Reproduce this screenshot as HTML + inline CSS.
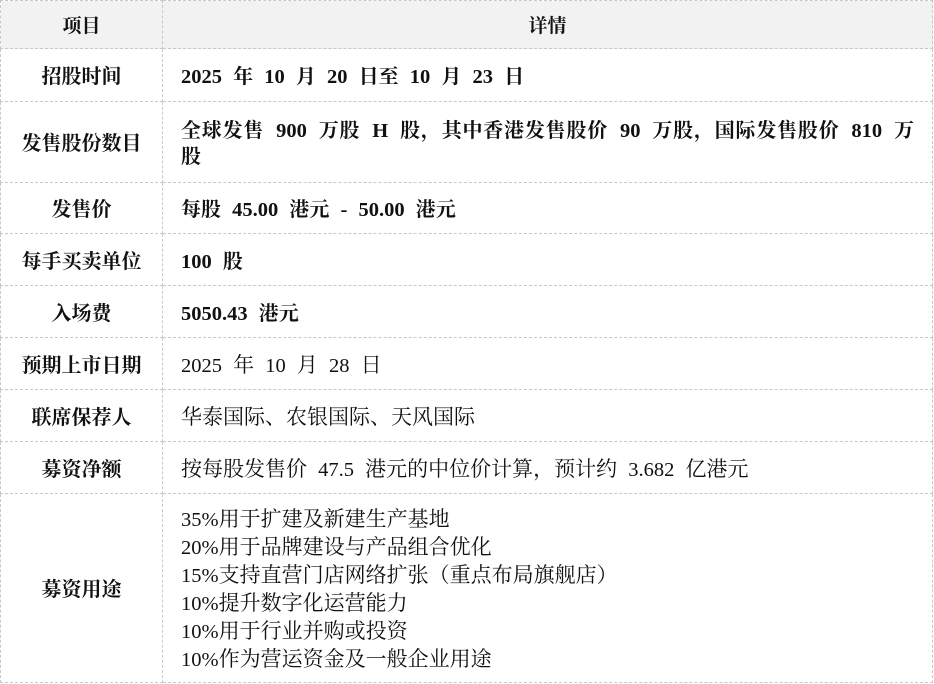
<!DOCTYPE html>
<html><head><meta charset="utf-8"><style>
body{margin:0;background:#fff;width:934px;height:684px;overflow:hidden;font-family:"Noto Serif CJK SC","Liberation Serif",serif;color:#111;}
table{border-collapse:collapse;position:absolute;left:0;top:0;width:933px;table-layout:fixed;}
td{border:1px dashed #c8c8c8;font-size:21px;padding:0 0 0 18px;line-height:28px;}
td.l{text-align:center;font-weight:bold;padding:0;font-size:20px;}
tr.h td{background:#f2f2f2;text-align:center;font-weight:bold;padding:0;font-size:19px;}
td.b{font-weight:bold;font-size:20px;}
i{font-style:normal;font-family:"Liberation Serif",serif;font-size:20.5px;line-height:0;word-spacing:6px;}
.j{display:block;text-align:justify;text-align-last:justify;padding-right:18px;}
</style></head><body>
<table>
<colgroup><col style="width:162px"><col></colgroup>
<tr class="h" style="height:48px"><td>项目</td><td>详情</td></tr>
<tr style="height:53px"><td class="l">招股时间</td><td class="b"><i>2025 </i>年<i> 10 </i>月<i> 20 </i>日至<i> 10 </i>月<i> 23 </i>日</td></tr>
<tr style="height:81px"><td class="l">发售股份数目</td><td class="b" style="line-height:26px"><span class="j">全球发售<i> 900 </i>万股<i> H </i>股，其中香港发售股价<i> 90 </i>万股，国际发售股价<i> 810 </i>万</span>股</td></tr>
<tr style="height:51px"><td class="l">发售价</td><td class="b">每股<i> 45.00 </i>港元<i> - 50.00 </i>港元</td></tr>
<tr style="height:52px"><td class="l">每手买卖单位</td><td class="b"><i>100 </i>股</td></tr>
<tr style="height:52px"><td class="l">入场费</td><td class="b"><i>5050.43 </i>港元</td></tr>
<tr style="height:52px"><td class="l">预期上市日期</td><td><i>2025 </i>年<i> 10 </i>月<i> 28 </i>日</td></tr>
<tr style="height:52px"><td class="l">联席保荐人</td><td>华泰国际、农银国际、天风国际</td></tr>
<tr style="height:52px"><td class="l">募资净额</td><td>按每股发售价<i> 47.5 </i>港元的中位价计算，预计约<i> 3.682 </i>亿港元</td></tr>
<tr style="height:189px"><td class="l">募资用途</td><td><i>35%</i>用于扩建及新建生产基地<br><i>20%</i>用于品牌建设与产品组合优化<br><i>15%</i>支持直营门店网络扩张（重点布局旗舰店）<br><i>10%</i>提升数字化运营能力<br><i>10%</i>用于行业并购或投资<br><i>10%</i>作为营运资金及一般企业用途</td></tr>
</table>
</body></html>
